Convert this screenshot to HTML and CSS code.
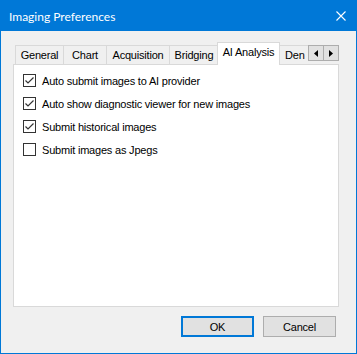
FILE: index.html
```html
<!DOCTYPE html>
<html lang="en">
<head>
    <meta charset="UTF-8">
    <title>Imaging Preferences</title>
    <link rel="stylesheet" href="styles.css">
</head>
<body>

<div class="window">
    <!-- Title bar -->
    <div class="titlebar">
        <span class="title">Imaging Preferences</span>
        <svg class="close" width="10" height="10" viewBox="0 0 10 10">
            <path d="M0.5 0.5 L9.5 9.5 M9.5 0.5 L0.5 9.5" stroke="#fff" stroke-width="1.1"/>
        </svg>
    </div>

    <div class="content">
        <!-- Tabs -->
        <div class="tabstrip">
            <div class="tabs">
                <div class="tab tab-general">General</div>
                <div class="tab tab-chart">Chart</div>
                <div class="tab tab-acquisition">Acquisition</div>
                <div class="tab tab-bridging">Bridging</div>
                <div class="tab tab-ai selected">AI Analysis</div>
                <div class="tab tab-den">Den</div>
            </div>
            <div class="scroll-buttons">
                <div class="scroll-btn">
                    <svg width="4" height="7" viewBox="0 0 4 7"><path d="M4 0 L0 3.5 L4 7 Z" fill="#000"/></svg>
                </div>
                <div class="scroll-btn">
                    <svg width="4" height="7" viewBox="0 0 4 7"><path d="M0 0 L4 3.5 L0 7 Z" fill="#000"/></svg>
                </div>
            </div>
        </div>

        <div class="panel">
            <label class="check-row">
                <span class="box checked"></span>
                Auto submit images to AI provider
            </label>
            <label class="check-row">
                <span class="box checked"></span>
                Auto show diagnostic viewer for new images
            </label>
            <label class="check-row">
                <span class="box checked"></span>
                Submit historical images
            </label>
            <label class="check-row">
                <span class="box"></span>
                Submit images as Jpegs
            </label>
        </div>

        <!-- Dialog buttons -->
        <div class="actions">
            <button class="btn btn-default">OK</button>
            <button class="btn">Cancel</button>
        </div>
    </div>
</div>

</body>
</html>
```

FILE: styles.css
```css
body {
    margin: 0;
    font-family: "Liberation Sans", Arial, sans-serif;
    font-size: 11px;
    letter-spacing: -0.2px;
    color: #000;
    background-color: #fff;
}
.window {
    width: 357px;
    height: 354px;
    box-sizing: border-box;
    border: 1px solid #0078d7;
    border-top: none;
    background-color: #f0f0f0;
    display: flex;
    flex-direction: column;
}
.titlebar {
    height: 31px;
    background-color: #0078d7;
    color: #fff;
    display: flex;
    align-items: center;
    justify-content: space-between;
    padding: 0 10px 0 8px;
    flex-shrink: 0;
}
.title {
    font-family: Lato, sans-serif;
    font-size: 12px;
    letter-spacing: 0;
    margin-top: 1px;
}
.content {
    flex: 1;
    padding: 11px 17px 0 12px;
    display: flex;
    flex-direction: column;
}

/* tab strip */
.tabstrip {
    display: flex;
    align-items: flex-end;
    height: 22px;
}
.tabs {
    display: flex;
    align-items: flex-end;
    width: 295px;
    height: 23px;
    padding-left: 2px;
    box-sizing: border-box;
    overflow: hidden;
    margin-bottom: -1px;
    position: relative;
    z-index: 1;
}
.tab {
    height: 19px;
    box-sizing: border-box;
    border: 1px solid #d9d9d9;
    border-bottom: none;
    background-color: #f0f0f0;
    text-align: center;
    line-height: 18px;
    white-space: nowrap;
    flex-shrink: 0;
    margin-bottom: 1px;
}
.tab + .tab {
    border-left: none;
}
.tab-general { width: 49px; }
.tab-chart { width: 43px; }
.tab-acquisition { width: 63px; }
.tab-bridging { width: 49px; }
.tab-ai { width: 63px; }
.tab-den { width: 40px; text-align: left; padding-left: 7px; }
.tab.selected {
    height: 23px;
    background-color: #fff;
    margin: 0 -2px;
    padding-bottom: 3px;
    line-height: 19px;
    border-left: 1px solid #d9d9d9;
    position: relative;
    z-index: 1;
    margin-bottom: 0;
}
.tab.selected + .tab {
    border-left: none;
}
.scroll-buttons {
    display: flex;
    align-self: flex-start;
    margin-top: 3px;
}
.scroll-btn {
    width: 16px;
    height: 16px;
    box-sizing: border-box;
    border: 1px solid #adadad;
    background-color: #e1e1e1;
    display: flex;
    align-items: center;
    justify-content: center;
}
.scroll-btn + .scroll-btn {
    margin-left: -1px;
}

/* panel */
.panel {
    height: 243px;
    width: 326px;
    box-sizing: border-box;
    border: 1px solid #d9d9d9;
    background-color: #fff;
    padding: 9px 0 0 9px;
    display: flex;
    flex-direction: column;
    gap: 10px;
}
.check-row {
    display: flex;
    align-items: center;
    height: 13px;
    gap: 6px;
}
.box {
    width: 13px;
    height: 13px;
    box-sizing: border-box;
    border: 1px solid #333;
    background-color: #fff;
    flex-shrink: 0;
}
.box.checked {
    background-image: url("data:image/svg+xml,%3Csvg xmlns='http://www.w3.org/2000/svg' width='11' height='11'%3E%3Cpath d='M1.5 5.5 L4 8 L9.5 2.5' fill='none' stroke='%23333' stroke-width='1.2'/%3E%3C/svg%3E");
    background-repeat: no-repeat;
}

/* buttons */
.actions {
    display: flex;
    justify-content: flex-end;
    gap: 9px;
    margin-top: 9px;
    padding-right: 3px;
}
.btn {
    width: 73px;
    height: 21px;
    box-sizing: border-box;
    border: 1px solid #adadad;
    background-color: #e1e1e1;
    font-family: inherit;
    font-size: 11px;
    letter-spacing: -0.2px;
    color: #000;
    padding: 0;
}
.btn-default {
    border: 2px solid #0078d7;
}
```
